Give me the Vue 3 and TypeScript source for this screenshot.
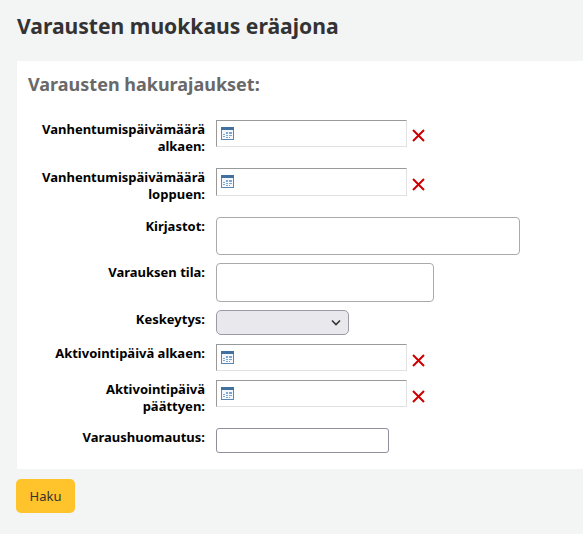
<script setup lang="ts">
interface Row { label: string; kind: 'date' | 'multi' | 'multi2' | 'select' | 'text'; cls: string }
const rows: Row[] = [
  { label: 'Vanhentumispäivämäärä alkaen:', kind: 'date', cls: 'r1' },
  { label: 'Vanhentumispäivämäärä loppuen:', kind: 'date', cls: 'r2' },
  { label: 'Kirjastot:', kind: 'multi', cls: 'r3' },
  { label: 'Varauksen tila:', kind: 'multi2', cls: 'r4' },
  { label: 'Keskeytys:', kind: 'select', cls: 'r5' },
  { label: 'Aktivointipäivä alkaen:', kind: 'date', cls: 'r6' },
  { label: 'Aktivointipäivä päättyen:', kind: 'date', cls: 'r7' },
  { label: 'Varaushuomautus:', kind: 'text', cls: 'r8' },
]
</script>

<template>
  <main class="page">
    <h1 class="title">Varausten muokkaus eräajona</h1>
    <form class="panel" @submit.prevent>
      <h2 class="legend">Varausten hakurajaukset:</h2>
      <div v-for="row in rows" :key="row.label" class="row" :class="row.cls">
        <label class="label">{{ row.label }}</label>
        <div v-if="row.kind === 'date'" class="date">
          <div class="date-input">
            <svg class="cal" width="13" height="13" viewBox="0 0 13 13">
              <rect x="0.5" y="0.5" width="12" height="12" fill="#f4f8fc" stroke="#5b88b3" />
              <rect x="0" y="0" width="13" height="3" fill="#41719f" />
              <g fill="#7fa6cc">
                <rect x="2" y="7" width="2" height="1" /><rect x="5" y="5" width="2" height="2" /><rect x="8" y="5" width="3" height="2" />
                <rect x="2" y="9" width="2" height="1" /><rect x="5" y="8" width="2" height="1" /><rect x="8" y="8" width="3" height="1" />
                <rect x="5" y="10" width="2" height="1" /><rect x="8" y="10" width="1" height="1" />
              </g>
            </svg>
          </div>
          <svg class="clear" width="13" height="13" viewBox="0 0 13 13">
            <path d="M1 1 L12 12 M12 1 L1 12" stroke="#cc0000" stroke-width="2" fill="none" />
          </svg>
        </div>
        <div v-else-if="row.kind === 'multi'" class="box box-lib"></div>
        <div v-else-if="row.kind === 'multi2'" class="box box-status"></div>
        <div v-else-if="row.kind === 'select'" class="select">
          <svg width="10" height="7" viewBox="0 0 10 7">
            <path d="M1 1.5 L5 5.5 L9 1.5" stroke="#333" stroke-width="1.6" fill="none" />
          </svg>
        </div>
        <div v-else class="note"></div>
      </div>
    </form>
    <button class="btn" type="button">Haku</button>
  </main>
</template>

<style scoped>
.page {
  box-sizing: border-box;
  height: 534px;
  overflow: hidden;
  background: #f3f4f4;
  padding: 12px 0 0 16px;
  font-family: "Noto Sans", "Open Sans", sans-serif;
}
.title {
  margin: 0 0 21px 1px;
  font-size: 21.1px;
  line-height: 28px;
  font-weight: 700;
  color: #333;
}
.panel {
  box-sizing: border-box;
  height: 408px;
  margin-left: 1px;
  background: #fff;
  padding: 11px 0 0 11px;
}
.legend {
  margin: 0 0 23px;
  font-size: 18px;
  line-height: 25px;
  font-weight: 700;
  color: #696969;
}
.row {
  display: flex;
  align-items: flex-start;
  gap: 11px;
}
.label {
  box-sizing: border-box;
  width: 177px;
  flex: none;
  text-align: right;
  font-size: 13px;
  line-height: 17px;
  font-weight: 700;
  color: #000;
  padding: 1px 0 0 13px;
}
.r1 { height: 48px; }
.r2 { height: 49px; }
.r3 { height: 46px; }
.r4 { height: 47px; }
.r5 { height: 34px; }
.r6 { height: 36px; }
.r7 { height: 48px; }
.date { display: flex; align-items: flex-start; }
.date-input {
  box-sizing: border-box;
  width: 191px;
  height: 27px;
  border: 1px solid #e1e1e1;
  border-top-color: #999;
  border-left-color: #999;
  background: #fff;
  padding: 6px 0 0 4px;
  display: flex;
  align-items: flex-start;
}
.r2 .date-input { height: 28px; }
.cal { display: block; }
.clear { margin: 10px 0 0 5px; }
.r1 .clear { margin-top: 9px; }
.box {
  box-sizing: border-box;
  border: 1px solid #aaa;
  border-radius: 4px;
  background: #fff;
}
.box-lib { width: 304px; height: 38px; }
.box-status { width: 218px; height: 39px; }
.select {
  box-sizing: border-box;
  width: 133px;
  height: 25px;
  border: 1px solid #9b9ba8;
  border-radius: 5px;
  background: #e9e9ed;
  display: flex;
  align-items: center;
  justify-content: flex-end;
  padding-right: 7px;
}
.note {
  box-sizing: border-box;
  width: 173px;
  height: 25px;
  border: 1px solid #8f8f9d;
  border-radius: 3px;
  background: #fff;
}
.btn {
  display: block;
  box-sizing: border-box;
  width: 59px;
  height: 34px;
  margin-top: 10px;
  border: 0;
  border-radius: 5px;
  background: #ffc32b;
  color: #333;
  font-family: inherit;
  font-size: 13px;
  padding: 0;
}
</style>
